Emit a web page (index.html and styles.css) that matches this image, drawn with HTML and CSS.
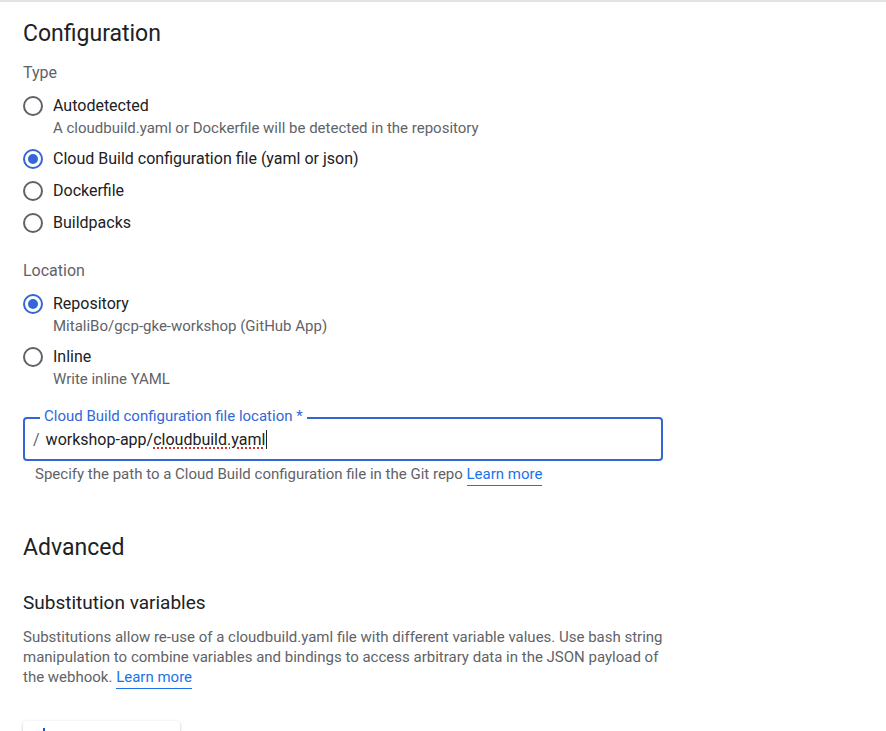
FILE: index.html
```html
<!DOCTYPE html>
<html>
<head>
<meta charset="utf-8">
<link rel="stylesheet" href="styles.css">
</head>
<body>
<div class="page">
  <h2 class="h-section">Configuration</h2>
  <div class="group-label">Type</div>
  <div class="radio-group first">
    <div class="option">
      <span class="radio"></span>
      <div class="opt-text">
        <div class="opt-label">Autodetected</div>
        <div class="opt-desc">A cloudbuild.yaml or Dockerfile will be detected in the repository</div>
      </div>
    </div>
    <div class="option">
      <span class="radio checked"></span>
      <div class="opt-text"><div class="opt-label">Cloud Build configuration file (yaml or json)</div></div>
    </div>
    <div class="option">
      <span class="radio"></span>
      <div class="opt-text"><div class="opt-label">Dockerfile</div></div>
    </div>
    <div class="option">
      <span class="radio"></span>
      <div class="opt-text"><div class="opt-label">Buildpacks</div></div>
    </div>
  </div>

  <div class="group-label loc">Location</div>
  <div class="radio-group first">
    <div class="option">
      <span class="radio checked"></span>
      <div class="opt-text">
        <div class="opt-label">Repository</div>
        <div class="opt-desc">MitaliBo/gcp-gke-workshop (GitHub App)</div>
      </div>
    </div>
    <div class="option">
      <span class="radio"></span>
      <div class="opt-text">
        <div class="opt-label">Inline</div>
        <div class="opt-desc">Write inline YAML</div>
      </div>
    </div>
  </div>

  <div class="field">
    <span class="field-label">Cloud Build configuration file location *</span>
    <span class="prefix">/</span>
    <span class="value">workshop-app/<span class="spell">cloudbuild.yaml</span><span class="caret"></span></span>
  </div>
  <div class="hint">Specify the path to a Cloud Build configuration file in the Git repo <a class="link">Learn more</a></div>

  <h2 class="h-section adv">Advanced</h2>
  <h3 class="h-sub">Substitution variables</h3>
  <p class="para">Substitutions allow re-use of a cloudbuild.yaml file with different variable values. Use bash string manipulation to combine variables and bindings to access arbitrary data in the JSON payload of the webhook. <a class="link">Learn more</a></p>

  <div class="card">
    <svg class="card-icon" width="14" height="14" viewBox="0 0 14 14"><path d="M7 1v12M1 7h12" stroke="#1a56db" stroke-width="2"/></svg>
  </div>
</div>
</body>
</html>
```
FILE: styles.css
```css
html, body {
  margin: 0;
  padding: 0;
  background: #fff;
  overflow: hidden;
}
body {
  font-family: Roboto, "Liberation Sans", Arial, sans-serif;
  color: #202124;
  height: 731px;
}
.page {
  border-top: 2px solid #e3e3e3;
  padding: 18px 0 0 23px;
}
.h-section {
  margin: 0;
  font-size: 23px;
  line-height: 28px;
  font-weight: 400;
  color: #202124;
}
.group-label {
  margin-top: 15px;
  font-size: 16px;
  line-height: 20px;
  color: #5f6368;
}
.group-label.loc {
  margin-top: 22px;
}
.radio-group {
  margin-top: 7px;
}
.option {
  display: flex;
  align-items: flex-start;
  padding: 4px 0;
}
.radio {
  box-sizing: border-box;
  width: 20px;
  height: 20px;
  margin-top: 2px;
  border: 2px solid #5f6368;
  border-radius: 50%;
  flex: none;
  display: flex;
  align-items: center;
  justify-content: center;
}
.radio.checked {
  border-color: #3367d6;
}
.radio.checked::after {
  content: "";
  width: 10px;
  height: 10px;
  border-radius: 50%;
  background: #3367d6;
}
.opt-text {
  margin-left: 10px;
}
.opt-label {
  font-size: 16px;
  line-height: 24px;
  color: #202124;
}
.opt-desc {
  font-size: 15px;
  line-height: 21px;
  color: #5f6368;
}
.field {
  position: relative;
  box-sizing: border-box;
  width: 640px;
  height: 44px;
  margin-top: 23px;
  border: 2px solid #3367d6;
  border-radius: 4px;
  display: flex;
  align-items: center;
  padding-left: 8px;
  font-size: 16px;
}
.field-label {
  position: absolute;
  left: 15px;
  top: -12px;
  padding: 0 4px;
  background: #fff;
  font-size: 15px;
  line-height: 18px;
  color: #3367d6;
}
.prefix {
  color: #5f6368;
  margin-right: 6px;
}
.value {
  color: #202124;
  display: flex;
  align-items: center;
}
.spell {
  text-decoration: underline dotted #d93025;
  text-decoration-thickness: 2px;
  text-underline-offset: 3px;
}
.caret {
  display: inline-block;
  width: 1px;
  height: 19px;
  background: #202124;
  margin-left: 1px;
}
.hint {
  margin-top: 3px;
  padding-left: 12px;
  font-size: 15px;
  line-height: 20px;
  color: #5f6368;
}
.link {
  color: #1a73e8;
  text-decoration: none;
  border-bottom: 1px solid #1a73e8;
  padding-bottom: 2px;
}
.h-section.adv {
  margin-top: 50px;
}
.h-sub {
  margin: 29px 0 0;
  font-size: 19px;
  line-height: 24px;
  font-weight: 400;
  color: #202124;
}
.para {
  margin: 12px 0 0;
  width: 640px;
  font-size: 15px;
  line-height: 20px;
  color: #5f6368;
}
.card {
  margin-top: 34px;
  width: 157px;
  height: 40px;
  border-radius: 4px;
  box-shadow: 0 1px 2px rgba(60, 64, 67, 0.25), 0 1px 4px rgba(60, 64, 67, 0.12);
  padding: 6px 0 0 14px;
  box-sizing: border-box;
}
.card-icon {
  display: block;
}
```
